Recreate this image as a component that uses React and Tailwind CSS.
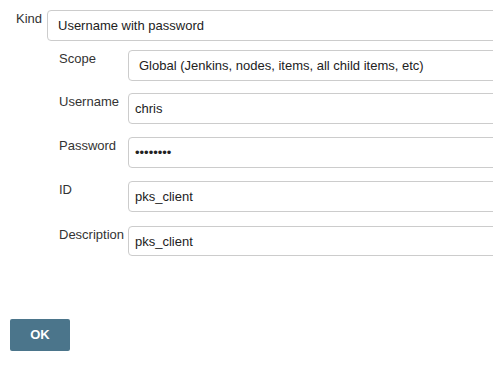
import React from 'react';

const Field = ({ label, children, className = '' }) => (
  <div className={`flex items-start ${className}`}>
    <span className="w-[69px] shrink-0 pt-px text-[13px] leading-[15px] text-[#333]">{label}</span>
    {children}
  </div>
);

const TextBox = ({ value, type = 'text', h = 'h-[31px]' }) => (
  <input
    readOnly
    type={type}
    value={value}
    className={`${h} w-[420px] shrink-0 rounded-[4px] border border-[#ccc] bg-white pl-[6px] text-[13px] text-[#222] outline-none`}
  />
);

export default function App() {
  return (
    <div className="w-[493px] h-[373px] overflow-hidden bg-white pt-[10px] font-['Liberation_Sans',Arial,sans-serif]">
      {/* Kind */}
      <div className="flex items-start">
        <span className="w-[47px] shrink-0 pl-[16px] pt-px text-[13px] leading-[15px] text-[#333]">Kind</span>
        <div className="flex h-[31px] w-[500px] shrink-0 items-center rounded-[4px] border border-[#ccc] bg-white pl-[10px] text-[13px] text-[#222]">
          Username with password
        </div>
      </div>

      {/* Credential fields */}
      <div className="pl-[59px]">
        <Field label="Scope" className="mt-[9px]">
          <div className="flex h-[31px] w-[420px] shrink-0 items-center rounded-[4px] border border-[#ccc] bg-white pl-[10px] text-[13px] text-[#222]">
            Global (Jenkins, nodes, items, all child items, etc)
          </div>
        </Field>
        <Field label="Username" className="mt-[12px]">
          <TextBox value="chris" />
        </Field>
        <Field label="Password" className="mt-[13px]">
          <TextBox value="pks_pass" type="password" />
        </Field>
        <Field label="ID" className="mt-[13px]">
          <TextBox value="pks_client" />
        </Field>
        <Field label="Description" className="mt-[14px]">
          <TextBox value="pks_client" h="h-[30px]" />
        </Field>
      </div>

      <button className="ml-[10px] mt-[63px] h-[32px] w-[60px] rounded-[2px] bg-[#4b758b] text-[13px] font-bold text-white">
        OK
      </button>
    </div>
  );
}
